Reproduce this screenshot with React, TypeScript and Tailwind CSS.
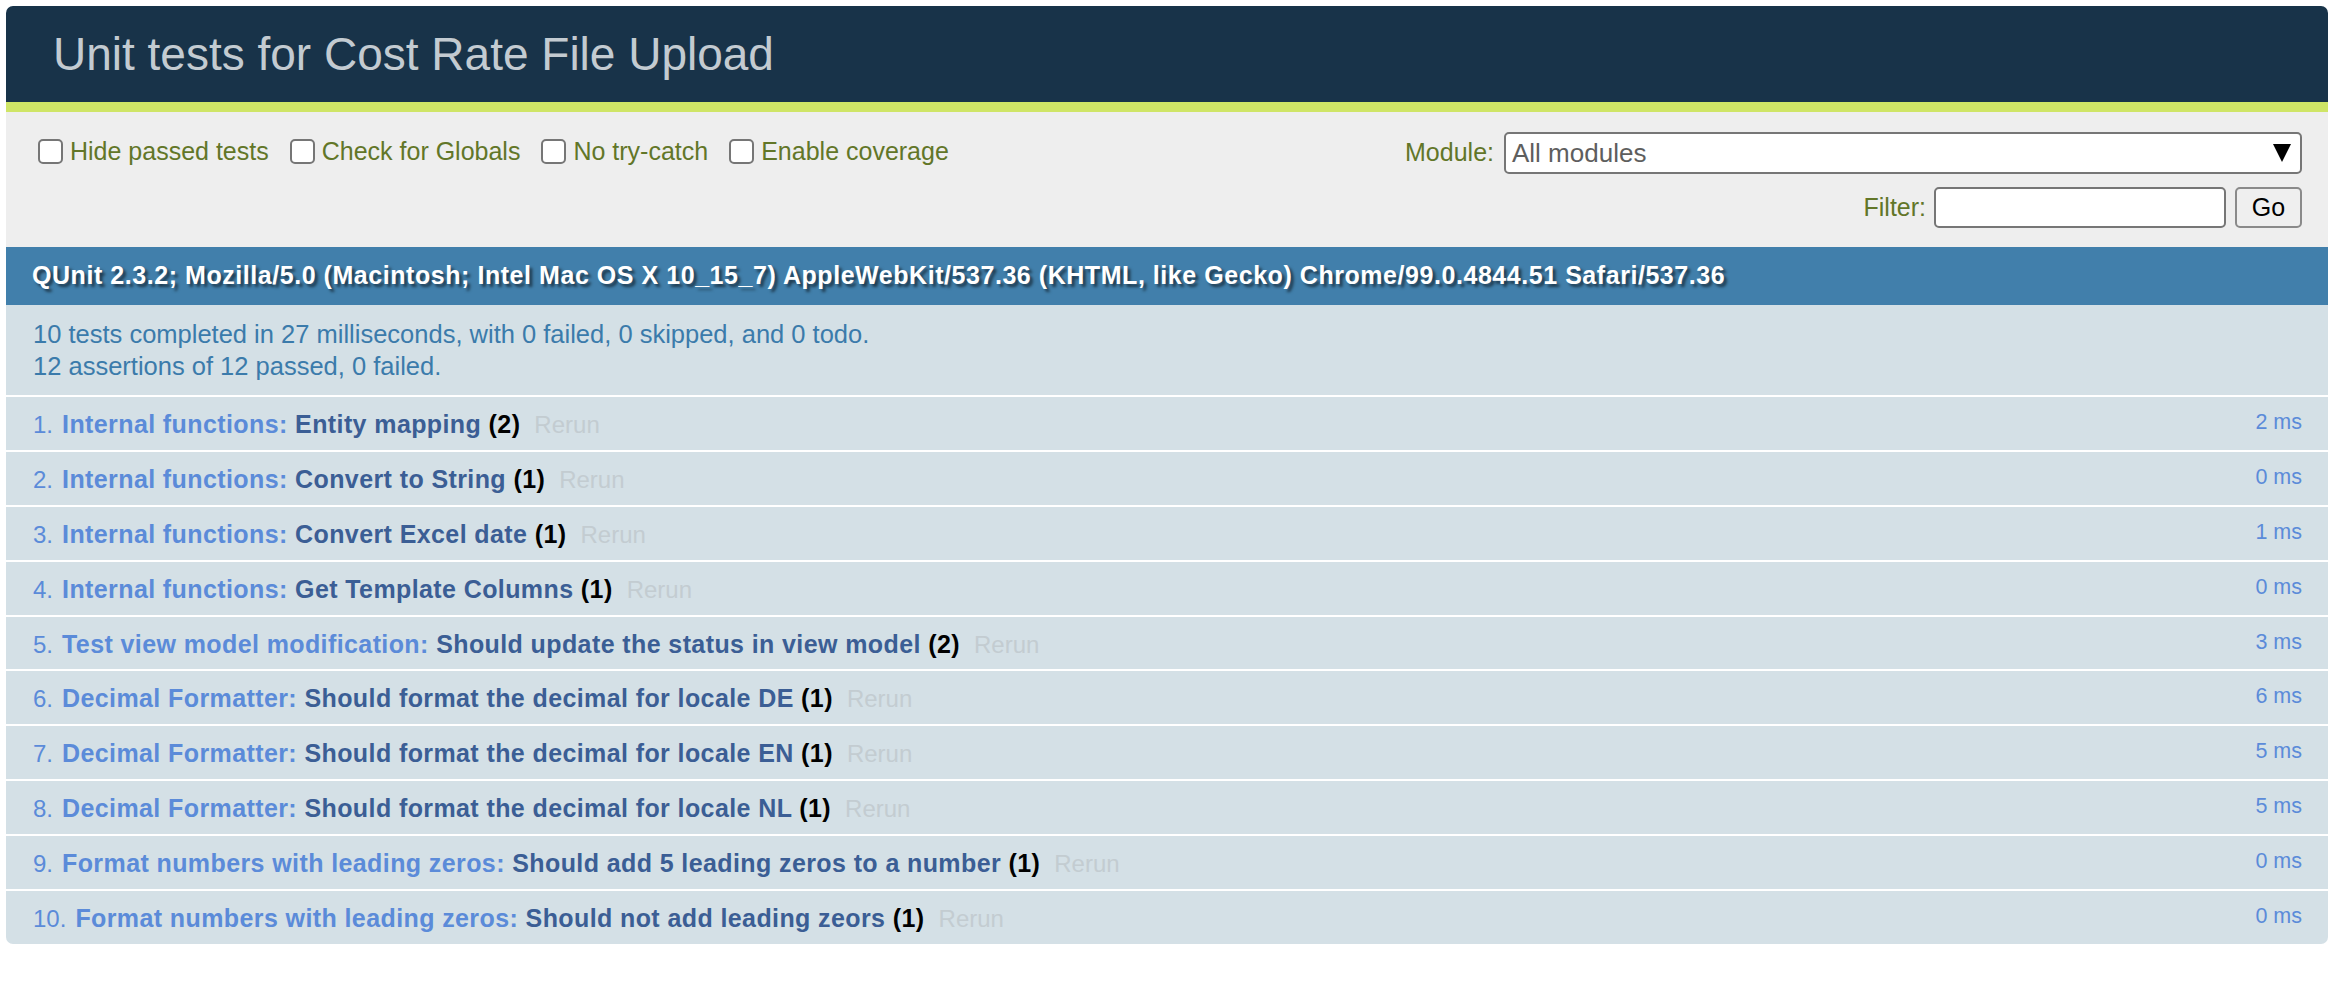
import React from 'react';

const tests = [
  { module: 'Internal functions', name: 'Entity mapping', count: 2, time: 2 },
  { module: 'Internal functions', name: 'Convert to String', count: 1, time: 0 },
  { module: 'Internal functions', name: 'Convert Excel date', count: 1, time: 1 },
  { module: 'Internal functions', name: 'Get Template Columns', count: 1, time: 0 },
  { module: 'Test view model modification', name: 'Should update the status in view model', count: 2, time: 3 },
  { module: 'Decimal Formatter', name: 'Should format the decimal for locale DE', count: 1, time: 6 },
  { module: 'Decimal Formatter', name: 'Should format the decimal for locale EN', count: 1, time: 5 },
  { module: 'Decimal Formatter', name: 'Should format the decimal for locale NL', count: 1, time: 5 },
  { module: 'Format numbers with leading zeros', name: 'Should add 5 leading zeros to a number', count: 1, time: 0 },
  { module: 'Format numbers with leading zeros', name: 'Should not add leading zeors', count: 1, time: 0 },
];

const Option = ({ label }: { label: string }) => (
  <label className="flex items-center">
    <input
      type="checkbox"
      className="appearance-none m-0 w-[25px] h-[25px] rounded-[5px] border-2 border-[#767676] bg-white"
    />
    <span className="ml-[7px] text-[25px] leading-[25px] text-[#627628]">{label}</span>
  </label>
);

const App = () => {
  return (
    <div className="min-h-screen bg-white font-['Liberation_Sans',Arial,sans-serif]">
      <div className="ml-[6px] mr-[10px] pt-[6px]">
        {/* Header */}
        <h1 className="h-[96px] flex items-center pl-[47px] rounded-t-[7px] bg-[#183349] text-[46px] font-normal text-[#c3cbd1]">
          Unit tests for Cost Rate File Upload
        </h1>
        <div className="h-[10px] bg-[#cfe566]" />

        {/* Toolbar */}
        <div className="h-[135px] bg-[#eeeeee] flex justify-between pl-[32px] pr-[26px] pt-[20px]">
          <div className="mt-[7px] flex items-start gap-[21px] h-[25px]">
            <Option label="Hide passed tests" />
            <Option label="Check for Globals" />
            <Option label="No try-catch" />
            <Option label="Enable coverage" />
          </div>
          <div className="flex flex-col items-end gap-[13px]">
            <div className="flex items-center">
              <span className="text-[25px] text-[#627628] mr-[10px]">Module:</span>
              <div className="w-[798px] h-[42px] rounded-[5px] border-2 border-[#767676] bg-white flex items-center justify-between pl-[6px] pr-[9px]">
                <span className="text-[26px] text-[#5e5e5e]">All modules</span>
                <svg width="18" height="18" viewBox="0 0 18 18">
                  <polygon points="0,0 18,0 9,18" fill="#000" />
                </svg>
              </div>
            </div>
            <div className="flex items-center">
              <span className="text-[25px] text-[#627628] mr-[8px]">Filter:</span>
              <input
                type="text"
                className="w-[292px] h-[41px] rounded-[5px] border-2 border-[#767676] bg-white outline-none"
              />
              <button className="ml-[9px] w-[67px] h-[41px] rounded-[5px] border-2 border-[#8a8a8a] bg-[#efefef] text-[25px] text-black">
                Go
              </button>
            </div>
          </div>
        </div>

        {/* User agent */}
        <div className="h-[58px] flex items-center pl-[26px] bg-[#417fab] text-white font-bold text-[25px] tracking-[0.55px] [text-shadow:3px_3px_3px_rgba(0,0,0,0.55)] whitespace-nowrap">
          QUnit 2.3.2; Mozilla/5.0 (Macintosh; Intel Mac OS X 10_15_7) AppleWebKit/537.36 (KHTML, like Gecko) Chrome/99.0.4844.51 Safari/537.36
        </div>

        {/* Result summary */}
        <div className="h-[92px] pt-[13px] pl-[27px] bg-[#d4e0e6] border-b-2 border-white text-[25.5px] leading-[32px] text-[#3b7bab]">
          <div>10 tests completed in 27 milliseconds, with 0 failed, 0 skipped, and 0 todo.</div>
          <div>12 assertions of 12 passed, 0 failed.</div>
        </div>

        {/* Tests */}
        <ol>
          {tests.map((t, i) => (
            <li
              key={i}
              className={`flex justify-between pl-[27px] pr-[26px] bg-[#d4e0e6] whitespace-nowrap ${
                i === tests.length - 1 ? 'h-[52.9px] rounded-b-[7px]' : 'h-[54.9px] border-b-2 border-white'
              }`}
            >
              <div className="pt-[1px] text-[24px] leading-[53px]">
                <span className="text-[#5b8bd9] mr-[9px]">{i + 1}.</span>
                <strong className="font-bold text-[25px] tracking-[0.4px]">
                  <span className="text-[#5b8bd9]">{t.module}:</span>{' '}
                  <span className="text-[#3b5e95]">{t.name}</span>{' '}
                  <b className="text-black">({t.count})</b>
                </strong>
                <a className="ml-[14px] text-[#c3ccd1]">Rerun</a>
              </div>
              <span className="text-[21.5px] leading-[50px] text-[#5b8bd9]">{t.time} ms</span>
            </li>
          ))}
        </ol>
      </div>
    </div>
  );
};

export default App;
